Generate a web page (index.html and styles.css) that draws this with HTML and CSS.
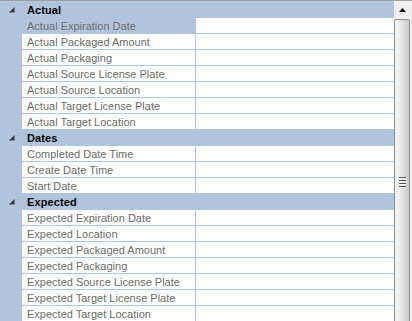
FILE: index.html
```html
<!doctype html>
<html lang="en">
<head>
	<meta charset="UTF-8">
	<title>Properties</title>
	<link rel="stylesheet" href="styles.css">
</head>
<body>
<div class="grid">
	<div class="rows">
		<div class="cat"><span class="tog"><svg width="6" height="6" viewBox="0 0 6 6"><polygon points="0,5.5 5.5,0 5.5,5.5" fill="#3a3a3a"/></svg></span><span class="label">Actual</span></div>
		<div class="row sel"><span class="gut"></span><span class="name">Actual Expiration Date</span><span class="val"></span></div>
		<div class="row"><span class="gut"></span><span class="name">Actual Packaged Amount</span><span class="val"></span></div>
		<div class="row"><span class="gut"></span><span class="name">Actual Packaging</span><span class="val"></span></div>
		<div class="row"><span class="gut"></span><span class="name">Actual Source License Plate</span><span class="val"></span></div>
		<div class="row"><span class="gut"></span><span class="name">Actual Source Location</span><span class="val"></span></div>
		<div class="row"><span class="gut"></span><span class="name">Actual Target License Plate</span><span class="val"></span></div>
		<div class="row"><span class="gut"></span><span class="name">Actual Target Location</span><span class="val"></span></div>

		<div class="cat"><span class="tog"><svg width="6" height="6" viewBox="0 0 6 6"><polygon points="0,5.5 5.5,0 5.5,5.5" fill="#3a3a3a"/></svg></span><span class="label">Dates</span></div>
		<div class="row"><span class="gut"></span><span class="name">Completed Date Time</span><span class="val"></span></div>
		<div class="row"><span class="gut"></span><span class="name">Create Date Time</span><span class="val"></span></div>
		<div class="row"><span class="gut"></span><span class="name">Start Date</span><span class="val"></span></div>

		<div class="cat"><span class="tog"><svg width="6" height="6" viewBox="0 0 6 6"><polygon points="0,5.5 5.5,0 5.5,5.5" fill="#3a3a3a"/></svg></span><span class="label">Expected</span></div>
		<div class="row"><span class="gut"></span><span class="name">Expected Expiration Date</span><span class="val"></span></div>
		<div class="row"><span class="gut"></span><span class="name">Expected Location</span><span class="val"></span></div>
		<div class="row"><span class="gut"></span><span class="name">Expected Packaged Amount</span><span class="val"></span></div>
		<div class="row"><span class="gut"></span><span class="name">Expected Packaging</span><span class="val"></span></div>
		<div class="row"><span class="gut"></span><span class="name">Expected Source License Plate</span><span class="val"></span></div>
		<div class="row"><span class="gut"></span><span class="name">Expected Target License Plate</span><span class="val"></span></div>
		<div class="row"><span class="gut"></span><span class="name">Expected Target Location</span><span class="val"></span></div>
	</div>
	<div class="vscroll">
		<div class="up"><svg width="7" height="4" viewBox="0 0 7 4"><polygon points="3.5,0 7,4 0,4" fill="#111"/></svg></div>
		<div class="thumb">
			<div class="grip"><i></i><i></i><i></i><i></i></div>
		</div>
	</div>
</div>
</body>
</html>
```

FILE: styles.css
```css
html, body{
	margin: 0;
	padding: 0;
	overflow: hidden;
	background: #fff;
}
.grid{
	display: flex;
	height: 320px;
	border-top: 1px solid #a0a0a0;
	overflow: hidden;
	font-family: "Liberation Sans", Arial, sans-serif;
	font-size: 11px;
}
.rows{
	width: 394px;
	padding-top: 1px;
	background: #b0c4de;
}
.cat{
	display: flex;
	align-items: center;
	height: 15px;
	border-bottom: 1px solid #b0c4de;
	background: #b0c4de;
	font-weight: bold;
	color: #000;
}
.tog{
	display: flex;
	align-items: center;
	width: 27px;
	padding-left: 9px;
	box-sizing: border-box;
	height: 15px;
}
.label{
	padding-top: 1px;
	line-height: 14px;
	letter-spacing: 0.1px;
}
.row{
	display: grid;
	grid-template-columns: 22px 174px 1fr;
	height: 15px;
	border-bottom: 1px solid #b0c4de;
}
.gut{
	background: #b0c4de;
}
.name{
	background: #fff;
	border-right: 1px solid #b0c4de;
	padding: 1px 0 0 5px;
	line-height: 14px;
	color: #6d6d6d;
	white-space: nowrap;
	overflow: hidden;
}
.val{
	background: #fff;
}
.sel .name{
	background: #b0c4de;
	color: #6f6f6f;
}
.vscroll{
	width: 18px;
	background: #efefef;
	display: flex;
	flex-direction: column;
}
.up{
	height: 17px;
	display: flex;
	align-items: center;
	justify-content: center;
	padding-right: 2px;
	flex-shrink: 0;
}
.thumb{
	flex-shrink: 0;
	width: 16px;
	height: 326px;
	margin-top: 1px;
	box-sizing: border-box;
	border: 1px solid #8e8e8e;
	border-radius: 2px;
	background: linear-gradient(to right, #f4f4f4 0%, #ececec 35%, #d9d9d9 70%, #c8c8c8 100%);
	display: flex;
	align-items: center;
	justify-content: center;
}
.grip{
	display: flex;
	flex-direction: column;
	gap: 1px;
}
.grip i{
	display: block;
	width: 7px;
	height: 1px;
	background: #555;
	border-bottom: 1px solid #fafafa;
}
```
